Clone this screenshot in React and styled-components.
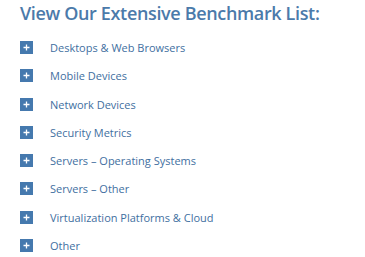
import React from "react";
import styled, { createGlobalStyle } from "styled-components";

const Global = createGlobalStyle`
  html, body { margin: 0; padding: 0; background: #ffffff; }
  body { font-family: "Open Sans", "Liberation Sans", sans-serif; }
`;

const Page = styled.div`
  padding: 2px 0 0 20px;
  width: 365px;
  height: 257px;
  box-sizing: border-box;
  overflow: hidden;
`;

const Title = styled.h2`
  margin: 0;
  font-family: "Open Sans", sans-serif;
  font-weight: 600;
  font-size: 18px;
  line-height: 22px;
  color: #4b7aaa;
  letter-spacing: -0.35px;
`;

const List = styled.ul`
  list-style: none;
  margin: 17px 0 0 0;
  padding: 0;
  display: flex;
  flex-direction: column;
  gap: 15.3px;
`;

const Item = styled.li`
  display: flex;
  align-items: center;
  height: 13px;
`;

const PlusBox = styled.span`
  width: 13px;
  height: 13px;
  background: #4579ae;
  color: #fff;
  display: flex;
  align-items: center;
  justify-content: center;
  flex: none;
`;

const Label = styled.span`
  margin-left: 17px;
  font-family: "Open Sans", sans-serif;
  font-size: 11px;
  color: #3f6f9f;
  white-space: nowrap;
`;

const items = [
  "Desktops & Web Browsers",
  "Mobile Devices",
  "Network Devices",
  "Security Metrics",
  "Servers – Operating Systems",
  "Servers – Other",
  "Virtualization Platforms & Cloud",
  "Other",
];

const Plus = () => (
  <svg width="7" height="7" viewBox="0 0 7 7">
    <path d="M3.5 0.5v6M0.5 3.5h6" stroke="#fff" strokeWidth="1.3" />
  </svg>
);

export default function App() {
  return (
    <>
      <Global />
      <Page>
        <Title>View Our Extensive Benchmark List:</Title>
        <List>
          {items.map((t) => (
            <Item key={t}>
              <PlusBox>
                <Plus />
              </PlusBox>
              <Label>{t}</Label>
            </Item>
          ))}
        </List>
      </Page>
    </>
  );
}
